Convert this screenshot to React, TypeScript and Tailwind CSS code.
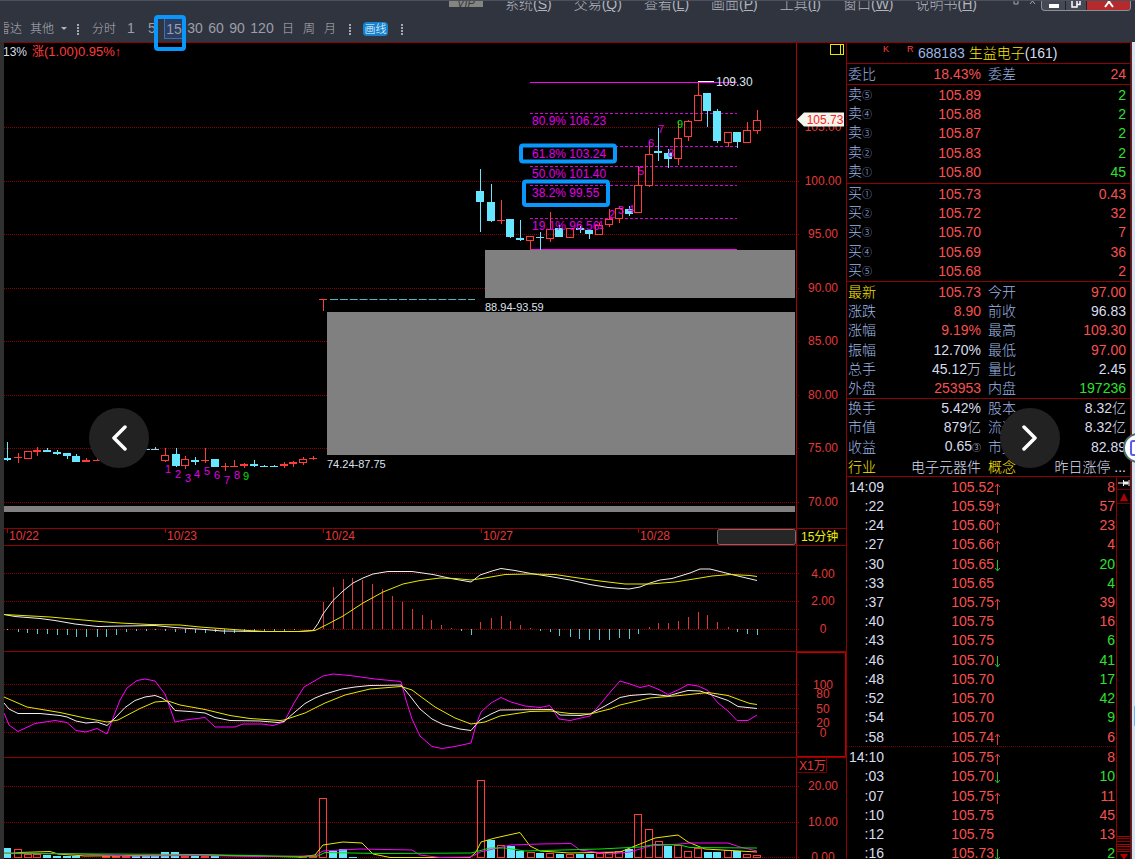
import React from "react";

const RED = "#ff3b3b";
const CYAN = "#66e6ff";
const GRID = "#8a0000";
const LINE = "#b00000";
const MAGENTA = "#ff00ff";

/* [x, high, bodyTop, bodyBottom, low, kind]  u = rising (hollow), d = falling (filled) */
type Candle = [number, number, number, number, number, "u" | "d"];

const candles: Candle[] = [
  [7, 442, 458, 460, 461, "d"],
  [18, 453, 457, 458, 463, "u"],
  [28, 451, 451, 458, 459, "u"],
  [37, 447, 450, 452, 456, "u"],
  [47, 448, 450, 452, 452, "d"],
  [57, 450, 452, 454, 455, "d"],
  [67, 453, 453, 456, 459, "d"],
  [76, 454, 456, 462, 462, "d"],
  [86, 458, 460, 462, 462, "u"],
  [97, 458, 460, 461, 461, "u"],
  [146, 449, 449, 450, 450, "d"],
  [155, 447, 449, 450, 450, "d"],
  [165, 448, 455, 460, 462, "u"],
  [176, 448, 454, 466, 467, "d"],
  [185, 456, 459, 465, 469, "u"],
  [195, 457, 460, 462, 465, "d"],
  [205, 448, 460, 461, 463, "u"],
  [215, 459, 459, 467, 467, "d"],
  [225, 463, 466, 467, 471, "u"],
  [234, 460, 466, 467, 467, "u"],
  [244, 463, 464, 466, 468, "u"],
  [254, 460, 464, 466, 467, "d"],
  [264, 465, 466, 467, 467, "d"],
  [274, 465, 466, 467, 467, "d"],
  [284, 462, 464, 466, 468, "u"],
  [293, 461, 462, 464, 467, "u"],
  [303, 457, 459, 462, 465, "u"],
  [313, 456, 458, 459, 460, "u"],
  [480, 169, 191, 202, 232, "d"],
  [491, 184, 202, 221, 222, "d"],
  [501, 200, 220, 221, 224, "u"],
  [510, 219, 219, 237, 238, "d"],
  [520, 220, 238, 240, 241, "d"],
  [530, 236, 236, 240, 250, "u"],
  [540, 232, 237, 238, 250, "d"],
  [550, 212, 229, 238, 242, "u"],
  [559, 225, 228, 237, 237, "d"],
  [570, 228, 228, 237, 237, "u"],
  [580, 226, 228, 230, 233, "d"],
  [589, 229, 230, 234, 239, "d"],
  [599, 223, 225, 234, 235, "u"],
  [609, 209, 219, 224, 227, "u"],
  [619, 206, 208, 218, 223, "u"],
  [629, 206, 209, 214, 216, "d"],
  [638, 166, 185, 212, 213, "u"],
  [649, 141, 154, 185, 187, "u"],
  [658, 128, 151, 153, 161, "d"],
  [668, 149, 153, 159, 168, "d"],
  [678, 121, 138, 158, 165, "u"],
  [688, 120, 121, 136, 141, "u"],
  [698, 82, 95, 120, 121, "u"],
  [707, 93, 93, 111, 127, "d"],
  [717, 109, 111, 141, 143, "d"],
  [728, 132, 132, 142, 147, "u"],
  [737, 132, 132, 142, 148, "d"],
  [747, 122, 130, 142, 143, "u"],
  [757, 110, 120, 130, 134, "u"],
];

const marks: [number, number, string][] = [
  [168, 473, "1"], [178, 478, "2"], [188, 482, "3"], [197, 478, "4"], [207, 475, "5"],
  [217, 479, "6"], [227, 484, "7"], [237, 479, "8"], [246, 480, "9"],
  [601, 229, "1"], [612, 218, "2"], [621, 214, "3"], [631, 213, "4"], [641, 175, "5"],
  [651, 147, "6"], [661, 133, "7"], [671, 157, "8"], [680, 128, "9"],
];

/* [x, top] above or below the zero line at 629 */
const macdBars: [number, number][] = [
  [7, 630], [18, 632], [27, 633], [37, 634], [47, 634], [57, 635], [67, 635], [76, 637], [86, 637],
  [97, 637], [106, 637], [116, 635], [126, 632], [136, 631], [146, 631], [155, 630], [165, 631],
  [175, 632], [185, 633], [195, 633], [205, 633], [215, 632], [224, 634], [234, 633], [244, 632],
  [254, 632], [264, 631], [274, 631], [284, 631], [294, 630],
  [323, 602], [333, 587], [343, 579], [352, 578], [362, 580], [372, 584], [382, 589], [392, 596],
  [402, 602], [412, 609], [422, 615], [431, 620], [441, 625], [451, 628], [461, 631], [471, 635],
  [480, 622], [491, 618], [501, 616], [510, 621], [520, 625], [530, 628], [540, 631], [550, 632],
  [559, 636], [570, 637], [579, 639], [589, 640], [599, 640], [609, 640], [619, 638], [629, 639],
  [638, 634], [649, 627], [658, 623], [668, 623], [678, 621], [688, 617], [698, 612], [707, 615],
  [717, 622], [728, 627], [737, 632], [747, 634], [757, 635],
];

/* [x, top, kind] */
const volumes: [number, number, "u" | "d"][] = [
  [7, 848, "d"], [18, 849, "u"], [28, 854, "u"], [37, 854, "u"], [47, 855, "d"], [57, 856, "d"],
  [67, 856, "d"], [76, 856, "d"], [86, 857, "u"], [97, 857, "u"], [106, 856, "u"], [116, 856, "u"],
  [126, 856, "u"], [136, 856, "d"], [146, 856, "d"], [155, 856, "d"], [165, 852, "d"], [175, 852, "d"],
  [185, 856, "u"], [195, 855, "d"], [205, 856, "u"], [215, 856, "d"], [225, 857, "u"], [303, 856, "u"],
  [313, 856, "u"], [323, 798, "u"], [333, 851, "d"], [343, 849, "d"], [353, 857, "d"], [363, 858, "d"],
  [373, 858, "d"], [382, 858, "d"], [481, 780, "u"], [491, 840, "d"], [501, 845, "u"], [511, 846, "d"],
  [520, 851, "d"], [531, 852, "u"], [540, 853, "d"], [550, 853, "u"], [560, 854, "d"], [570, 854, "u"],
  [580, 854, "d"], [590, 854, "d"], [600, 853, "u"], [609, 852, "u"], [619, 851, "u"], [629, 849, "d"],
  [638, 814, "u"], [649, 829, "u"], [659, 841, "u"], [668, 846, "d"], [678, 845, "u"], [688, 851, "u"],
  [698, 848, "u"], [708, 852, "d"], [717, 852, "d"], [728, 850, "u"], [737, 851, "d"], [747, 854, "u"],
  [757, 855, "u"],
];

function Axis({ y, children, x = 823 }: { y: number; children: string; x?: number }) {
  return (
    <text x={x} y={y + 4} fill="#e03a3a" fontSize="12" textAnchor="middle">
      {children}
    </text>
  );
}

function Grid({ ys }: { ys: number[] }) {
  return (
    <>
      {ys.map((y) => (
        <line key={y} x1="4" x2="799" y1={y + 0.5} y2={y + 0.5} stroke={GRID} strokeDasharray="1 1" />
      ))}
    </>
  );
}

function Curve({ points, color }: { points: string; color: string }) {
  return <polyline points={points} fill="none" stroke={color} strokeWidth="1" />;
}

function Panel({ box, label, children }: { box: string; label: string; children: React.ReactNode }) {
  return (
    <section aria-label={label} className="min-h-0 overflow-hidden border-t border-[#8f0000]">
      <svg viewBox={box} className="block h-full w-full" preserveAspectRatio="xMinYMin meet">
        {children}
      </svg>
    </section>
  );
}

function PricePanel() {
  const levels: [number, string][] = [
    [125, "80.9% 106.23"],
    [158, "61.8% 103.24"],
    [178, "50.0% 101.40"],
    [197, "38.2% 99.55"],
    [230, "19.1% 96.56"],
  ];
  return (
    <Panel box="4 43 842 485" label="K线">
      <Grid ys={[127, 181, 234, 288, 341, 395, 448, 502]} />
      <line x1="796.5" x2="796.5" y1="43" y2="528" stroke={LINE} />
      <text x="3" y="56" fontSize="12" fill="#d8dce8">13%</text>
      <text x="32" y="56" fontSize="12" fill={RED}>
        涨<tspan fontSize="13">(1.00)0.95%↑</tspan>
      </text>
      <g stroke="#e8e800" fill="none">
        <rect x="830.5" y="44.5" width="13" height="10" />
        <line x1="840.5" x2="840.5" y1="44" y2="55" />
      </g>
      {["105.00", "100.00", "95.00", "90.00", "85.00", "80.00", "75.00", "70.00"].map((t, i) => (
        <Axis key={t} y={[127, 181, 234, 288, 341, 395, 448, 502][i]}>{t}</Axis>
      ))}
      <path d="M797 119.5 L804 112.5 H844 V126.5 H804 Z" fill="#f2f5ee" />
      <text x="825" y="124" fontSize="12" fill="#ff2020" textAnchor="middle">105.73</text>

      <g stroke={MAGENTA}>
        <line x1="530" x2="737" y1="82.5" y2="82.5" />
        {[113, 146, 166, 185, 218].map((y) => (
          <line key={y} x1="530" x2="737" y1={y + 0.5} y2={y + 0.5} strokeDasharray="3 2" strokeOpacity="0.85" />
        ))}
        <line x1="530" x2="737" y1="249.5" y2="249.5" />
      </g>

      <g shapeRendering="crispEdges">
        {candles.map(([x, hi, t, b, lo, k]) =>
          k === "d" ? (
            <g key={x} fill={CYAN}>
              <rect x={x} y={hi} width="1" height={lo - hi} />
              <rect x={x - 4} y={t} width="8" height={b - t} />
            </g>
          ) : (
            <g key={x} stroke={RED} fill="none">
              <line x1={x + 0.5} x2={x + 0.5} y1={hi} y2={t} />
              <line x1={x + 0.5} x2={x + 0.5} y1={b} y2={lo} />
              {b - t > 2 ? (
                <rect x={x - 3.5} y={t + 0.5} width="7" height={b - t} />
              ) : (
                <rect x={x - 4} y={t} width="8" height={b - t} fill={RED} stroke="none" />
              )}
            </g>
          ),
        )}
      </g>
      <path d="M319 299.5 H327 M323.5 299 V311" stroke={RED} fill="none" />
      <line x1="330" x2="475" y1="299.5" y2="299.5" stroke="#4fb8c4" strokeDasharray="8 1.86" />

      <g fill="#808080">
        <rect x="485" y="250" width="310" height="48" />
        <rect x="327" y="312" width="468" height="143" />
        <rect x="4" y="506" width="791" height="6" />
      </g>
      <line x1="698" x2="714" y1="81.5" y2="81.5" stroke="#fff" />
      <g fontSize="12" fill="#dfe3ee">
        <text x="716" y="86">109.30</text>
        <text x="485" y="311" fontSize="11">88.94-93.59</text>
        <text x="327" y="468" fontSize="11">74.24-87.75</text>
      </g>
      <g fontSize="12" fill="#e000e6">
        {levels.map(([y, t]) => (
          <text key={t} x="532" y={y}>{t}</text>
        ))}
        {marks.map(([x, y, t]) => (
          <text key={`${x}-${t}`} x={x} y={y} fontSize="11" textAnchor="middle" fill={t === "9" ? "#00e000" : "#e000e6"}>
            {t}
          </text>
        ))}
      </g>
      <g fill="none" stroke="#0a97fb" strokeWidth="4">
        <rect x="521" y="145.5" width="94" height="16" rx="2" />
        <rect x="524" y="181.5" width="84" height="23.5" rx="2" />
      </g>
    </Panel>
  );
}

function DateBar() {
  const dates: [number, string][] = [[7, "10/22"], [165, "10/23"], [323, "10/24"], [481, "10/27"], [638, "10/28"]];
  return (
    <Panel box="4 529 842 16" label="日期">
      {dates.map(([x, d]) => (
        <g key={d}>
          <line x1={x + 0.5} x2={x + 0.5} y1="529" y2="533" stroke={LINE} />
          <text x={x + 2} y="540" fontSize="12" fill="#e03a3a">{d}</text>
        </g>
      ))}
      <rect x="717.5" y="529.5" width="78" height="15" rx="2" fill="#262626" stroke="#707070" />
      <line x1="796.5" x2="796.5" y1="529" y2="545" stroke={LINE} />
      <text x="801" y="541" fontSize="12" fill="#f0f000">15分钟</text>
    </Panel>
  );
}

function MacdPanel() {
  return (
    <Panel box="4 546 842 105" label="MACD">
      <Grid ys={[573, 601, 629]} />
      <line x1="796.5" x2="796.5" y1="546" y2="651" stroke={LINE} />
      <g shapeRendering="crispEdges">
        {macdBars.map(([x, y]) => (
          <rect key={x} x={x} y={Math.min(y, 629)} width="1" height={Math.abs(629 - y)} fill={y < 629 ? "#e03636" : "#5cc8d8"} />
        ))}
      </g>
      <Curve color="#f0f0f0" points="4,614.5 15,616.5 40,618.5 55,620.5 75,624 98,626.5 125,626 155,625.5 175,627.5 205,629.5 222,631 260,631.5 298,631.5 313,630.5 318,623.5 323,614 333,600.5 343,591 353,583 363,578 373,574 388,571.5 412,571.5 433,574.5 451,578.5 471,582 480,575 492,571 501,568.5 515,570.5 531,573.5 550,576.5 570,580 590,584.5 608,587.5 629,589 640,587 650,583 660,580 672,578.5 690,573 700,569 710,569 722,572 740,576.5 757,580.5" />
      <Curve color="#e8e800" points="4,614.5 50,617 100,621.5 120,623 150,624.5 180,625 200,627 240,630 265,631.5 300,631.5 315,630.5 328,624 343,616 363,603 383,592 403,584 420,580.5 440,578 455,578.5 471,580 485,578 505,574.5 530,574 555,574.5 575,577.5 600,581 625,584 650,584 675,582 700,578 712,576 730,574.5 750,575.5 757,576.5" />
      <Axis y={574}>4.00</Axis>
      <Axis y={601}>2.00</Axis>
      <Axis y={629}>0</Axis>
    </Panel>
  );
}

function KdjPanel() {
  return (
    <Panel box="4 652 842 105" label="KDJ">
      <Grid ys={[684, 694, 708, 722, 732]} />
      <Curve color={MAGENTA} points="4,713 9,725 18,731.5 35,723.5 55,720.5 67,722.5 76,730.5 86,732 97,728.5 107,734 113,718 120,700 127,688 137,680.5 145,679 155,681 165,694 175,722 185,720 205,717.5 215,727 235,727 243,724 262,724 273,725.5 284,722 294,703 304,687 323,676 333,674 350,675.5 375,679 401,681.5 406,700 412,719 420,736 432,746.5 442,748.5 455,746.5 471,743 476,725 481,712 491,703 501,697.5 511,702 525,706 540,707.5 550,705.5 559,719 570,720.5 590,716 600,704.5 612,690 620,681 630,684 640,687.5 649,685.5 660,690 668,694.5 680,689 688,684.5 698,686 708,690.5 718,703 728,711 737,720.5 748,720.5 757,715" />
      <Curve color="#f0f0f0" points="4,703 9,709 18,713.5 40,713.5 60,715.5 67,717 76,721 86,723 97,722 107,725.5 115,718 125,707.5 135,700.5 145,697 155,695.5 162,698 168,702 175,710.5 190,711.5 205,713 215,717.5 230,720.5 260,721 278,722.5 284,721.5 295,712 305,703.5 315,698 325,694 342,689 355,687 370,685.5 401,685 410,696 420,709 432,719 443,724.5 460,729 471,730.5 480,720 491,714 500,710 550,709.5 553,710 560,715 580,715.5 590,714 605,706 620,697.5 630,695.5 650,694 668,696 680,692.5 688,690.5 700,691 712,695 728,700.5 738,706.5 757,708.5" />
      <Curve color="#e8e800" points="4,697 27,707 60,712.5 85,718 107,722 118,720 140,708.5 155,702 168,701 180,705 205,709.5 230,715.5 250,718.5 280,720.5 284,720 305,713 325,703 345,695 370,689 401,686.5 412,690 420,696 435,707 455,718 471,724 485,722 500,716 530,711.5 550,711 570,713.5 590,714 610,709 620,705 650,698 680,695.5 708,692.5 728,695.5 740,700 750,703.5 757,704.5" />
      <path d="M796.5 652 V756.5 H845.5 V652.5 H796.5" fill="none" stroke="#c00000" />
      <Axis y={685}>100</Axis>
      <Axis y={694}>80</Axis>
      <Axis y={709}>50</Axis>
      <Axis y={723}>20</Axis>
      <Axis y={733}>0</Axis>
    </Panel>
  );
}

function VolumePanel() {
  return (
    <Panel box="4 758 842 101" label="成交量">
      <Grid ys={[786, 822, 857]} />
      <line x1="796.5" x2="796.5" y1="758" y2="859" stroke={LINE} />
      <g shapeRendering="crispEdges">
        {volumes.map(([x, y, k]) =>
          k === "d" ? (
            <rect key={x} x={x - 4} y={y} width="8" height={858 - y} fill={CYAN} />
          ) : (
            <rect key={x} x={x - 3.5} y={y + 0.5} width="7" height={857 - y} fill="none" stroke={RED} />
          ),
        )}
      </g>
      <Curve color="#e8e800" points="4,854 20,852.5 50,851.5 58,854 85,856 200,855 300,857 315,855 323,845 343,842 362,843 373,854 390,857.5 470,857.5 476,852 481,842 495,838 520,832.5 530,846 540,851 570,853 620,852 640,844 655,838 678,835 688,842 705,849 757,852" />
      <Curve color={MAGENTA} points="4,853 60,853.5 80,854 130,856 200,855.5 260,856.5 315,856 323,851 360,849 412,850 420,855 440,857.5 471,857 480,852 511,845 540,844 571,843.5 580,850 610,854 630,852 650,846 680,844 690,843 728,843 740,847 757,851" />
      <Curve color="#00e800" points="4,853.5 100,854 200,854.5 300,856.5 318,856 325,852.5 380,853.5 471,853 490,848 505,848 525,851 600,849 640,847 655,844.5 680,845 690,847.5 757,848" />
      <path d="M797 772.5 H826.5 V758" fill="none" stroke="#700000" />
      <text x="799" y="770" fontSize="12" fill="#e03a3a">X1万</text>
      <Axis y={786}>20.00</Axis>
      <Axis y={822}>10.00</Axis>
      <Axis y={857}>0.00</Axis>
    </Panel>
  );
}

const R = "text-[#f85050]";
const G = "text-[#2fe02f]";
const W = "text-[#d8dcec]";
const L = "text-[#9fb6e4]";
const Y = "text-[#ffe600]";

const asks: [string, string, string][] = [
  ["⑤", "105.89", "2"], ["④", "105.88", "2"], ["③", "105.87", "2"], ["②", "105.83", "2"], ["①", "105.80", "45"],
];
const bids: [string, string, string][] = [
  ["①", "105.73", "0.43"], ["②", "105.72", "32"], ["③", "105.70", "7"], ["④", "105.69", "36"], ["⑤", "105.68", "2"],
];

function Depth({ side, rows, tone }: { side: string; rows: [string, string, string][]; tone: string }) {
  return (
    <table className="h-[97px] w-full table-fixed border-collapse">
      <tbody>
        {rows.map(([n, p, v]) => (
          <tr key={n}>
            <th scope="row" className={`w-[50px] p-0 pl-px text-left font-light ${L}`}>
              {side}
              <span className="text-[10px]">{n}</span>
            </th>
            <td className={`w-[84px] p-0 text-right ${R}`}>{p}</td>
            <td className={`p-0 pr-1 text-right ${tone}`}>{v}</td>
          </tr>
        ))}
      </tbody>
    </table>
  );
}

type Stat = [string, string, string, string, string, string];
const statsA: Stat[] = [
  ["最新", "105.73", R, "今开", "97.00", R],
  ["涨跌", "8.90", R, "前收", "96.83", W],
  ["涨幅", "9.19%", R, "最高", "109.30", R],
  ["振幅", "12.70%", W, "最低", "97.00", R],
  ["总手", "45.12万", W, "量比", "2.45", W],
  ["外盘", "253953", R, "内盘", "197236", G],
];
const statsB: Stat[] = [
  ["换手", "5.42%", W, "股本", "8.32亿", W],
  ["市值", "879亿", W, "流通", "8.32亿", W],
  ["收益", "0.65③", W, "市盈", "82.89", W],
  ["行业", "电子元器件", W, "概念", "昨日涨停 ...", W],
];

function Stats({ rows, height }: { rows: Stat[]; height: string }) {
  return (
    <table className={`w-full table-fixed border-collapse font-light ${height}`}>
      <tbody>
        {rows.map(([a, av, ac, b, bv, bc]) => (
          <tr key={a}>
            <th scope="row" className={`w-[40px] whitespace-nowrap p-0 pl-px text-left font-light ${a === "最新" || a === "行业" ? Y : L}`}>{a}</th>
            <td className={`w-[94px] whitespace-nowrap p-0 text-right ${ac}`}>
              {av.endsWith("③") ? (
                <>
                  {av.slice(0, -1)}
                  <span className="text-[9px]">③</span>
                </>
              ) : (
                av
              )}
            </td>
            <th scope="row" className={`w-[43px] whitespace-nowrap p-0 pl-[7px] text-left font-light ${b === "概念" ? Y : L}`}>{b}</th>
            <td className={`whitespace-nowrap p-0 pr-1 text-right ${bc}`}>{bv}</td>
          </tr>
        ))}
      </tbody>
    </table>
  );
}

const ticks: [string, string, "up" | "down" | "", string, "r" | "g"][] = [
  ["14:09", "105.52", "up", "8", "r"],
  [":22", "105.59", "up", "57", "r"],
  [":24", "105.60", "up", "23", "r"],
  [":27", "105.66", "up", "4", "r"],
  [":30", "105.65", "down", "20", "g"],
  [":33", "105.65", "", "4", "g"],
  [":37", "105.75", "up", "39", "r"],
  [":40", "105.75", "", "16", "r"],
  [":43", "105.75", "", "6", "g"],
  [":46", "105.70", "down", "41", "g"],
  [":48", "105.70", "", "17", "g"],
  [":52", "105.70", "", "42", "g"],
  [":54", "105.70", "", "9", "g"],
  [":58", "105.74", "up", "6", "r"],
  ["14:10", "105.75", "up", "8", "r"],
  [":03", "105.70", "down", "10", "g"],
  [":07", "105.75", "up", "11", "r"],
  [":10", "105.75", "", "45", "r"],
  [":12", "105.75", "", "13", "r"],
  [":16", "105.73", "down", "2", "g"],
];

function TickArrow({ dir }: { dir: "up" | "down" | "" }) {
  return (
    <svg viewBox="0 0 6 12" className="inline-block h-3 w-[6px] align-[-3px]" fill="none">
      {dir === "up" && <path d="M3.5 12 V1 M1 4 L3.5 1 L6 4" stroke="#e04040" />}
      {dir === "down" && <path d="M3.5 0 V11 M1 8 L3.5 11 L6 8" stroke="#20c030" />}
    </svg>
  );
}

function QuotePanel() {
  return (
    <aside className="flex w-[285px] shrink-0 flex-col overflow-hidden border-x border-t border-[#8f0000] text-[14px] leading-[16px]">
      <h1 className="flex h-[21px] shrink-0 items-center border-b border-[#8f0000] pl-9">
        <span className="w-6 self-start text-[9px] leading-[12px] text-[#ff4040]">K</span>
        <span className="w-[11px] self-start text-[9px] leading-[12px] text-[#ff4040]">R</span>
        <span className={L}>688183</span>
        <span className={`ml-1 font-light ${Y}`}>生益电子</span>
        <span className={W}>(161)</span>
      </h1>
      <div className="flex h-[21px] shrink-0 items-center border-b border-[#8f0000] pl-px pr-1">
        <span className={`w-[40px] font-light ${L}`}>委比</span>
        <span className={`w-[93px] text-right ${R}`}>18.43%</span>
        <span className={`ml-[7px] font-light ${L}`}>委差</span>
        <span className={`ml-auto ${R}`}>24</span>
      </div>
      <div className="shrink-0 border-b border-[#8f0000] pb-px">
        <Depth side="卖" rows={asks} tone={G} />
      </div>
      <div className="shrink-0 border-b border-[#8f0000]">
        <Depth side="买" rows={bids} tone={R} />
      </div>
      <div className="shrink-0 border-b border-[#8f0000]">
        <Stats rows={statsA} height="h-[116px]" />
      </div>
      <div className="shrink-0 border-b border-[#8f0000]">
        <Stats rows={statsB} height="h-[77px]" />
      </div>
      <div className="flex min-h-0 flex-1">
        <div className="min-w-0 flex-1 overflow-hidden">
          <table className="h-[386px] w-full table-fixed border-collapse">
            <tbody>
              {ticks.map(([t, p, d, v, c]) => (
                <tr key={t} className={t === "14:10" ? "border-t border-dotted border-[#700000]" : ""}>
                  <td className={`w-[37px] p-0 text-right ${W}`}>{t}</td>
                  <td className={`w-[116px] whitespace-nowrap p-0 text-right ${R}`}>
                    {p}
                    <TickArrow dir={d} />
                  </td>
                  <td className={`p-0 pr-px text-right ${c === "r" ? R : G}`}>{v}</td>
                </tr>
              ))}
            </tbody>
          </table>
        </div>
        <div className="flex w-[14px] shrink-0 flex-col border-l border-[#8f0000]">
          <button aria-label="固定" className="flex h-[13px] shrink-0 items-center justify-center border-b border-[#6a0000]">
            <svg viewBox="0 0 12 8" className="h-2 w-3" stroke="#f0f0f0" fill="#f0f0f0">
              <path d="M0 4 H5 M5.5 1 V7 M11 1 V7" fill="none" />
              <path d="M6 3 H10 V5 H6 Z" />
            </svg>
          </button>
          <button aria-label="向上" className="flex h-[14px] shrink-0 items-center justify-center border-b border-[#6a0000]">
            <svg viewBox="0 0 8 8" className="size-2"><path d="M4 0 L8 8 H0 Z" fill="#b00000" /></svg>
          </button>
          <div className="flex-1" />
          <div className="flex h-[16px] shrink-0 flex-col justify-between border-y border-[#b00000] py-px">
            <i className="h-px bg-[#8f0000]" />
            <i className="h-px bg-[#8f0000]" />
            <i className="h-px bg-[#b00000]" />
            <i className="h-px bg-[#b00000]" />
            <i className="h-px bg-[#8f0000]" />
          </div>
          <button aria-label="向下" className="flex h-[7px] shrink-0 items-end justify-center">
            <svg viewBox="0 0 8 5" className="h-[5px] w-2"><path d="M0 0 H8 L4 6 Z" fill="#b00000" /></svg>
          </button>
        </div>
      </div>
    </aside>
  );
}

function Dots({ width }: { width: string }) {
  return (
    <span className={`flex justify-center ${width}`}>
      <svg viewBox="0 0 2 12" className="h-3 w-[2px]">
        <line x1="1" x2="1" y1="1" y2="12" stroke="#a4a9b2" strokeWidth="2" strokeDasharray="2 1" />
      </svg>
    </span>
  );
}

const menus: [string, string][] = [
  ["系统", "S"], ["交易", "Q"], ["查看", "L"], ["画面", "P"], ["工具", "I"], ["窗口", "W"], ["说明书", "H"],
];

function Header() {
  return (
    <header className="h-[42px] shrink-0 overflow-hidden border-t border-[#4a505c] bg-[#30343f] text-[#b0b5be]">
      <div className="flex h-[14px] items-start justify-end overflow-hidden">
        <span className="mr-[22px] h-[6px] w-[34px] overflow-hidden bg-[#85857f] text-center text-[11px] italic leading-[4px] text-[#35373c]">
          VIP
        </span>
        <nav className="mr-[36px] flex gap-[22px] text-[14px] font-light leading-[6px]">
          {menus.map(([m, k]) => (
            <button key={m} className="whitespace-nowrap">
              {m}(<u>{k}</u>)
            </button>
          ))}
        </nav>
        <svg viewBox="0 0 24 6" className="mr-[4px] h-[6px] w-6" fill="none" stroke="#a0a5af">
          <path d="M1 0 V3 H5 V0 M17 3 L19.5 0 L22 3" />
        </svg>
        <div className="mr-1 flex h-[10px] overflow-hidden rounded-b-[4px] border border-t-0 border-[#8b8f98] bg-[#444955]">
          <button aria-label="最小化" className="flex w-[23px] items-center justify-center">
            <svg viewBox="0 0 10 4" className="h-1 w-[10px]"><rect width="10" height="4" fill="#fff" /></svg>
          </button>
          <button aria-label="还原" className="flex w-[22px] items-start justify-center border-x border-[#202329]">
            <svg viewBox="0 0 10 7" className="h-[7px] w-[10px]" fill="none" stroke="#fff">
              <path d="M1 0 V6 H6 V0 M6 3.5 H9 V0" strokeWidth="1.5" />
            </svg>
          </button>
          <button aria-label="关闭" className="flex w-[43px] items-start justify-center bg-[#b52a2c]">
            <svg viewBox="0 0 10 7" className="h-[7px] w-[10px]" stroke="#fff" strokeWidth="2">
              <path d="M1 6 L7 -2 M3 -2 L9 6" />
            </svg>
          </button>
        </div>
      </div>
      <div className="flex h-[27px] items-center pl-1 text-[12px] font-light">
        <button className="flex w-[18px] justify-end overflow-hidden whitespace-nowrap">雷达</button>
        <button className="ml-2 w-6 whitespace-nowrap">其他</button>
        <span className="flex w-5 justify-center">
          <svg viewBox="0 0 6 3" className="h-[3px] w-[6px]"><path d="M0 0 H6 L3 3 Z" fill="#b0b5be" /></svg>
        </span>
        <Dots width="w-2" />
        <button className="w-[44px]">分时</button>
        <div className="flex text-[14px] text-[#9a9fa9]">
          <button className="w-[10px]">1</button>
          <button className="w-8">5</button>
          <button className="-ml-1 w-5 border border-[#3d6fb8] bg-[#2c3e60] leading-[16px]">15</button>
          <button className="w-[22px]">30</button>
          <button className="w-5">60</button>
          <button className="w-[22px]">90</button>
          <button className="w-7">120</button>
        </div>
        <button className="w-6">日</button>
        <button className="w-[18px]">周</button>
        <button className="w-6">月</button>
        <Dots width="w-4" />
        <button className="ml-[5px] h-[14px] w-[25px] whitespace-nowrap rounded-[4px] bg-[#1482cf] text-[11px] leading-[14px] text-white">画线</button>
        <Dots width="w-7" />
      </div>
    </header>
  );
}

export default function App() {
  return (
    <div className="relative flex h-screen w-full flex-col overflow-hidden bg-black font-['Liberation_Sans','Noto_Sans_CJK_SC',sans-serif]">
      <Header />
      <div className="flex min-h-0 flex-1">
        <div className="w-1 shrink-0 bg-[#303030]" />
        <main className="grid min-w-0 flex-1 grid-rows-[486fr_17px_106fr_106fr_102fr]">
          <PricePanel />
          <DateBar />
          <MacdPanel />
          <KdjPanel />
          <VolumePanel />
        </main>
        <QuotePanel />
        <div className="w-1 shrink-0 border-l border-[#30343f] bg-[#d6e6f2]" />
      </div>

      <div className="absolute left-[154px] top-[15px] h-[36px] w-[32px] rounded-[4px] border-4 border-[#0a97fb]" />
      <button aria-label="上一张" className="absolute left-[89px] top-[408px] flex size-[60px] items-center justify-center rounded-full bg-[#222]">
        <svg viewBox="0 0 16 28" className="h-7 w-4" fill="none" stroke="#fff" strokeWidth="3.5" strokeLinecap="round" strokeLinejoin="round">
          <path d="M14 3 L3 14 L14 25" />
        </svg>
      </button>
      <button aria-label="下一张" className="absolute right-[75px] top-[408px] flex size-[60px] items-center justify-center rounded-full bg-[#222]">
        <svg viewBox="0 0 16 28" className="h-7 w-4" fill="none" stroke="#fff" strokeWidth="3.5" strokeLinecap="round" strokeLinejoin="round">
          <path d="M2 3 L13 14 L2 25" />
        </svg>
      </button>
      <div className="absolute right-0 top-[432px] h-8 w-3 overflow-hidden">
        <svg viewBox="0 0 12 32" className="h-8 w-3">
          <circle cx="15" cy="16" r="14" fill="#fff" stroke="#4d7076" strokeWidth="2" />
          <path d="M12 9 H10 Q8 9 8 11 V21 Q8 23 10 23 H12" fill="none" stroke="#5a5cf0" strokeWidth="2" />
        </svg>
      </div>
      <div className="absolute right-0 top-[706px] h-5 w-px bg-[#6db8f2]" />
    </div>
  );
}
